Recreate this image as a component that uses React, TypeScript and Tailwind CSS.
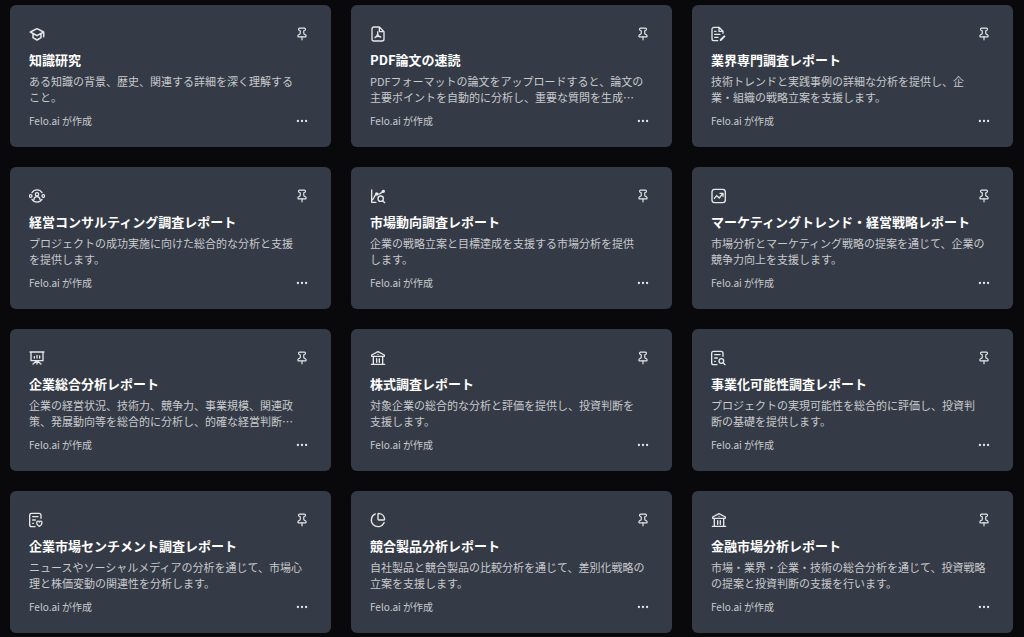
import type { ReactNode } from "react";
import { ChartPie, Ellipsis, Pin } from "lucide-react";

type Agent = { title: string; description: string; icon: ReactNode };

function Glyph({ children }: { children: ReactNode }) {
  return (
    <svg className="w-4 h-4" viewBox="0 0 24 24" fill="none" stroke="currentColor" strokeWidth={2} strokeLinecap="round" strokeLinejoin="round" aria-hidden="true">
      {children}
    </svg>
  );
}

const bankIcon = (
  <Glyph>
    <path d="M2.5 9.5v-2L12 2.5l9.5 5v2zM2 21.5h20M5 10v11M10 13v5.5M14 13v5.5M19 10v11" />
    <path d="M12 6.5h.01" />
  </Glyph>
);

const agents: Agent[] = [
  {
    title: "知識研究",
    description: "ある知識の背景、歴史、関連する詳細を深く理解する\nこと。",
    icon: (
      <Glyph>
        <path d="M2 9l10-5 10 5-10 5.500zM22 9v7M6 12v5.500l6 3.500 6-3.500V12" strokeWidth={2.3} />
      </Glyph>
    ),
  },
  {
    title: "PDF論文の速読",
    description: "PDFフォーマットの論文をアップロードすると、論文の\n主要ポイントを自動的に分析し、重要な質問を生成…",
    icon: (
      <Glyph>
        <path d="M14 1.5H6a3 3 0 0 0-3 3v15a3 3 0 0 0 3 3h12a3 3 0 0 0 3-3v-11zM14 2v6.5h6.5" />
        <path d="M11.5 9c.5 3-1 6.5-4 8.500M11.5 12c.5 2.5 2 4 4.5 4.500M8 17c2-1.5 5-2 8-.5" />
      </Glyph>
    ),
  },
  {
    title: "業界専門調査レポート",
    description: "技術トレンドと実践事例の詳細な分析を提供し、企\n業・組織の戦略立案を支援します。",
    icon: (
      <Glyph>
        <path d="M18 11V8l-6-6H4.500a3 3 0 0 0-3 3v14a3 3 0 0 0 3 3H10M12 2v6h6M5.500 8h2M5.500 12.500h8M5.500 17h5" />
        <path d="M14.500 21l5.500-5.500" strokeWidth={3} />
      </Glyph>
    ),
  },
  {
    title: "経営コンサルティング調査レポート",
    description: "プロジェクトの成功実施に向けた総合的な分析と支援\nを提供します。",
    icon: (
      <Glyph>
        <circle cx="2.5" cy="12" r="2" />
        <circle cx="21.5" cy="12" r="2" />
        <circle cx="12" cy="9.5" r="2.5" />
        <path d="M7.5 17c.5-3 2-4 4.5-4s4 1 4.5 4M4.5 7C8 1.5 16 1.5 19.5 7M4.5 17c3.5 5.5 11.5 5.5 15 0" />
      </Glyph>
    ),
  },
  {
    title: "市場動向調査レポート",
    description: "企業の戦略立案と目標達成を支援する市場分析を提供\nします。",
    icon: (
      <Glyph>
        <path d="M2.5 3v18.5H9M3 18c3-1 4-9 7-9s4 1 6-1 3-3 5-3.5" />
        <circle cx="10" cy="9" r="1.5" fill="currentColor" />
        <circle cx="20" cy="5" r="1.5" fill="currentColor" />
        <circle cx="16" cy="16" r="4" />
        <path d="M19 19l3 3" />
      </Glyph>
    ),
  },
  {
    title: "マーケティングトレンド・経営戦略レポート",
    description: "市場分析とマーケティング戦略の提案を通じて、企業の\n競争力向上を支援します。",
    icon: (
      <Glyph>
        <rect x="1.5" y="2" width="20" height="20" rx="4" />
        <path d="M5 15.5l3.5-4 4 3.5 5-6.5M13.5 8H18v4.5" />
      </Glyph>
    ),
  },
  {
    title: "企業総合分析レポート",
    description: "企業の経営状況、技術力、競争力、事業規模、関連政\n策、発展動向等を総合的に分析し、的確な経営判断…",
    icon: (
      <Glyph>
        <path d="M1.5 3h21M3 3v13h18V3M12 16v5M11 17l-5 4M13 17l5 4M8 10v2M12 8v4M16 9v3" />
      </Glyph>
    ),
  },
  {
    title: "株式調査レポート",
    description: "対象企業の総合的な分析と評価を提供し、投資判断を\n支援します。",
    icon: bankIcon,
  },
  {
    title: "事業化可能性調査レポート",
    description: "プロジェクトの実現可能性を総合的に評価し、投資判\n断の基礎を提供します。",
    icon: (
      <Glyph>
        <path d="M18 9.5V5a3 3 0 0 0-3-3H4a3 3 0 0 0-3 3v14a3 3 0 0 0 3 3h5M5.5 7h8M5.5 12h4M5.5 17h1" />
        <circle cx="15.5" cy="16.5" r="3.5" />
        <path d="M18.5 19.5l2.5 2.5" />
      </Glyph>
    ),
  },
  {
    title: "企業市場センチメント調査レポート",
    description: "ニュースやソーシャルメディアの分析を通じて、市場心\n理と株価変動の関連性を分析します。",
    icon: (
      <Glyph>
        <path d="M18 9.5V5a3 3 0 0 0-3-3H4a3 3 0 0 0-3 3v14a3 3 0 0 0 3 3h5M5.5 7h8M5.5 12h4M5.5 17h1" />
        <path d="M15.5 21.5c-2-1-4-3-4-5.5 0-2.5 3-3 4-1 1-2 4-1.5 4 1 0 2.5-2 4.5-4 5.5z" />
      </Glyph>
    ),
  },
  {
    title: "競合製品分析レポート",
    description: "自社製品と競合製品の比較分析を通じて、差別化戦略の\n立案を支援します。",
    icon: <ChartPie className="w-4 h-4" />,
  },
  {
    title: "金融市場分析レポート",
    description: "市場・業界・企業・技術の総合分析を通じて、投資戦略\nの提案と投資判断の支援を行います。",
    icon: bankIcon,
  },
];

function AgentCard({ agent }: { agent: Agent }) {
  return (
    <li className="min-w-0 rounded-md bg-[#353b46] px-[19px] pt-[21px] pb-[18px]">
      <div className="flex items-center justify-between pr-[3px] text-[#e6e7e9]">
        {agent.icon}
        <button type="button" aria-label="ピン留め" className="hover:text-white">
          <Pin className="w-3.5 h-3.5" />
        </button>
      </div>
      <h3 className="mt-2 truncate text-[13px] leading-5 font-bold text-white">{agent.title}</h3>
      <p className="mt-[3px] whitespace-pre-line text-[11px] leading-4 text-[#c8cace]">{agent.description}</p>
      <div className="mt-2 flex h-4 items-center justify-between pr-[3px]">
        <span className="text-[10px] leading-4 text-[#c8cace]">Felo.ai が作成</span>
        <button type="button" aria-label="メニュー" className="text-[#e6e7e9] hover:text-white">
          <Ellipsis className="w-3.5 h-3.5" />
        </button>
      </div>
    </li>
  );
}

export default function App() {
  return (
    <main lang="ja" className="min-h-screen bg-[#09090b] pr-[11px] pl-[10px] pt-[5px] pb-1 font-['Noto_Sans_CJK_JP',sans-serif]">
      <ul className="grid grid-cols-3 gap-5">
        {agents.map((agent) => (
          <AgentCard key={agent.title} agent={agent} />
        ))}
      </ul>
    </main>
  );
}
